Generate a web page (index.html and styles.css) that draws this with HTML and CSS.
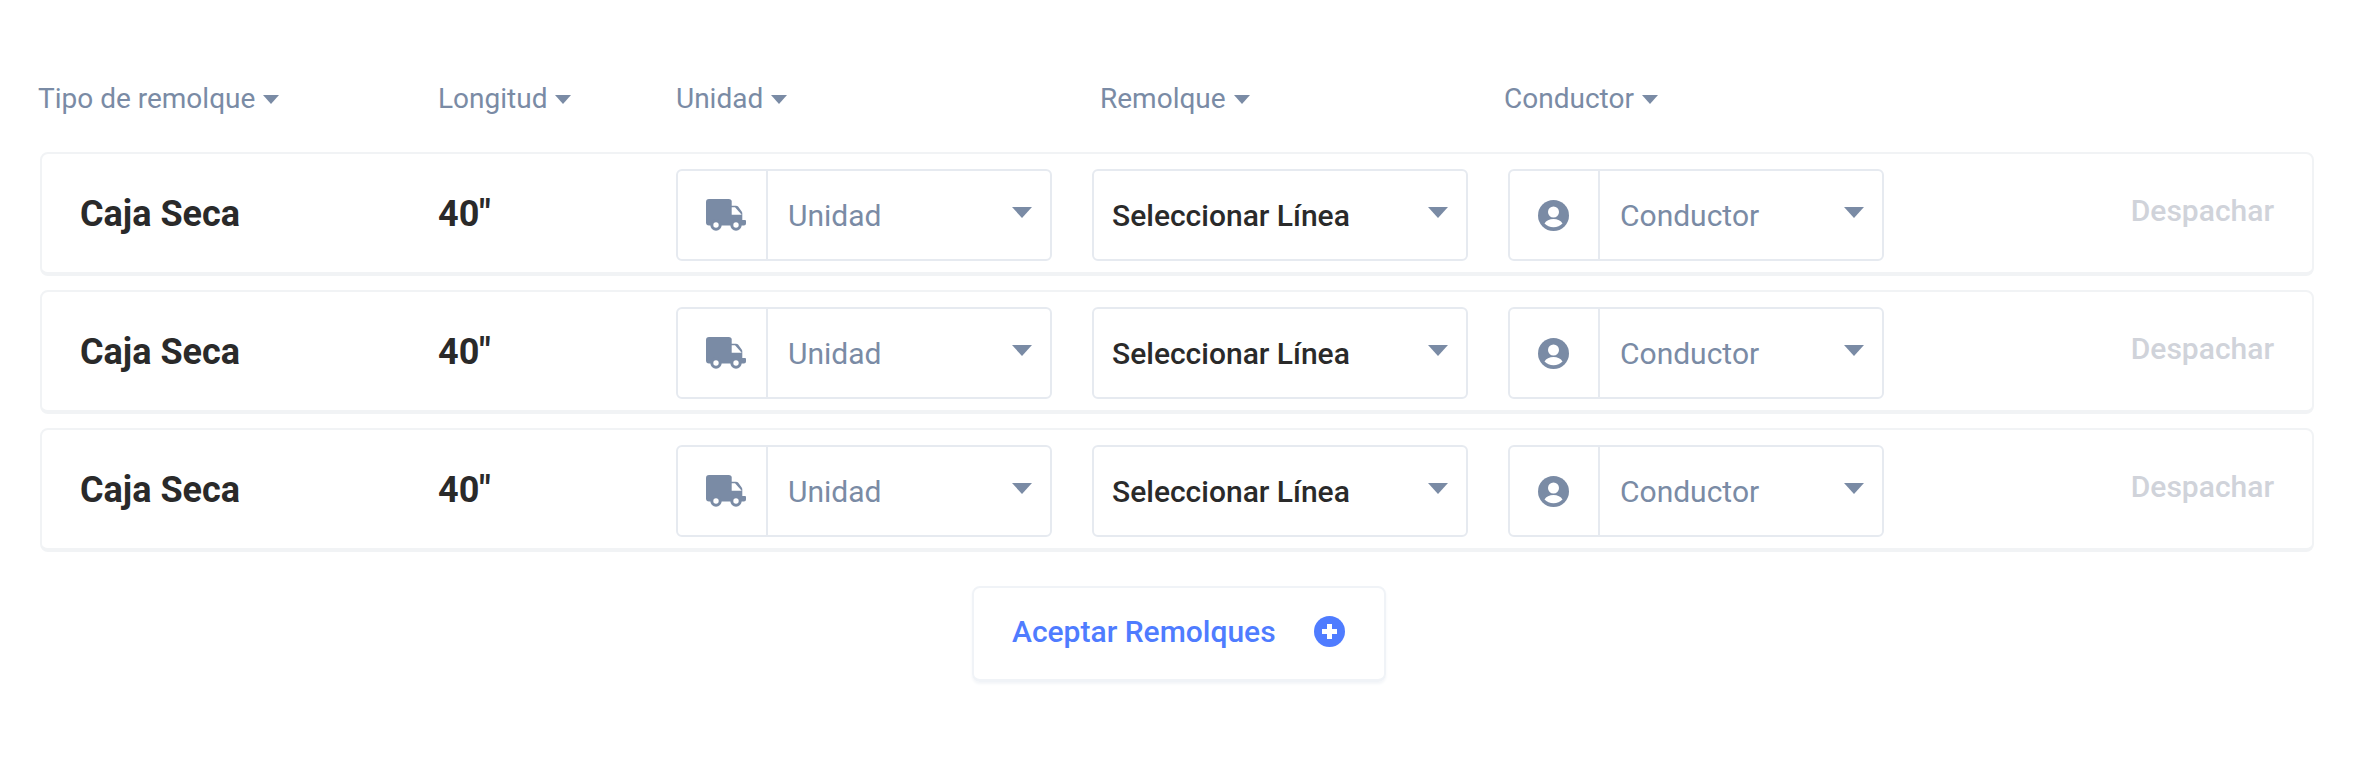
FILE: index.html
```html
<!DOCTYPE html>
<html lang="es">
<head>
<meta charset="utf-8">
<title>Remolques</title>
<link rel="stylesheet" href="styles.css">
</head>
<body>
<svg class="defs" aria-hidden="true">
  <symbol id="truck" viewBox="0 0 40 32">
    <path fill="#7a8ba5" d="M3 0h20a3 3 0 0 1 2.700 1.700V6.700h4.300a3 3 0 0 1 2.100.9l3.600 5a3 3 0 0 1 .6 2V21h2.700a1 1 0 0 1 1 1v2.500a2 2 0 0 1-2 2H3a3 3 0 0 1-3-3V3a3 3 0 0 1 3-3z"/>
    <path fill="#fff" d="M25.700 8.300H29l6.700 7.400h-10z"/>
    <circle cx="10" cy="26" r="5.700" fill="#7a8ba5"/>
    <circle cx="10" cy="26" r="2.700" fill="#fff"/>
    <circle cx="30" cy="26" r="5.700" fill="#7a8ba5"/>
    <circle cx="30" cy="26" r="2.700" fill="#fff"/>
  </symbol>
  <symbol id="person" viewBox="0 0 31 31">
    <circle cx="15.500" cy="15.500" r="15.500" fill="#7a8ba5"/>
    <circle cx="15.500" cy="12" r="5.500" fill="#fff"/>
    <path fill="#fff" d="M6.500 23.500c1.500-3 5-4.500 9-4.500s7.500 1.500 9 4.500c-2.200 2.300-5.500 3.700-9 3.700s-6.800-1.400-9-3.700z"/>
  </symbol>
</svg>
<main class="page">
  <div class="head">
    <div class="hcell h1">Tipo de remolque<span class="caret"></span></div>
    <div class="hcell h2">Longitud<span class="caret"></span></div>
    <div class="hcell h3">Unidad<span class="caret"></span></div>
    <div class="hcell h4">Remolque<span class="caret"></span></div>
    <div class="hcell h5">Conductor<span class="caret"></span></div>
  </div>
  <div class="rows">
    <div class="row">
      <div class="type">Caja Seca</div>
      <div class="len">40"</div>
      <div class="fields">
        <div class="sel"><span class="addon"><svg class="truck"><use href="#truck"/></svg></span><span class="val ph">Unidad</span><span class="arrow"></span></div>
        <div class="sel"><span class="val">Seleccionar Línea</span><span class="arrow"></span></div>
        <div class="sel"><span class="addon"><svg class="person"><use href="#person"/></svg></span><span class="val ph">Conductor</span><span class="arrow"></span></div>
      </div>
      <div class="go">Despachar</div>
    </div>
    <div class="row">
      <div class="type">Caja Seca</div>
      <div class="len">40"</div>
      <div class="fields">
        <div class="sel"><span class="addon"><svg class="truck"><use href="#truck"/></svg></span><span class="val ph">Unidad</span><span class="arrow"></span></div>
        <div class="sel"><span class="val">Seleccionar Línea</span><span class="arrow"></span></div>
        <div class="sel"><span class="addon"><svg class="person"><use href="#person"/></svg></span><span class="val ph">Conductor</span><span class="arrow"></span></div>
      </div>
      <div class="go">Despachar</div>
    </div>
    <div class="row">
      <div class="type">Caja Seca</div>
      <div class="len">40"</div>
      <div class="fields">
        <div class="sel"><span class="addon"><svg class="truck"><use href="#truck"/></svg></span><span class="val ph">Unidad</span><span class="arrow"></span></div>
        <div class="sel"><span class="val">Seleccionar Línea</span><span class="arrow"></span></div>
        <div class="sel"><span class="addon"><svg class="person"><use href="#person"/></svg></span><span class="val ph">Conductor</span><span class="arrow"></span></div>
      </div>
      <div class="go">Despachar</div>
    </div>
  </div>
  <div class="foot">
    <div class="accept">Aceptar Remolques<svg class="plus" viewBox="0 0 31 31"><circle cx="15.500" cy="15.500" r="15.500" fill="#4f7cff"/><path fill="#fff" d="M13 8h5v5h5v5h-5v5h-5v-5H8v-5h5z"/></svg></div>
  </div>
</main>
</body>
</html>
```
FILE: styles.css
```css
* { box-sizing: border-box; }
html, body { margin: 0; background: #fff; }
body { font-family: Roboto, "Liberation Sans", sans-serif; }
.defs { display: none; }
.page { width: 2374px; height: 762px; padding: 78px 60px 0 40px; }
.head { display: flex; height: 40px; align-items: center; margin-left: -2px; color: #7a8ba5; font-size: 28px; line-height: 40px; }
.hcell { display: flex; align-items: center; margin-top: 2px; }
.h1 { width: 400px; }
.h2 { width: 238px; }
.h3 { width: 424px; }
.h4 { width: 404px; }
.caret { width: 0; height: 0; margin-left: 8px; border-left: 8px solid transparent; border-right: 8px solid transparent; border-top: 9px solid #7a8ba5; }
.rows { display: flex; flex-direction: column; gap: 14px; margin-top: 34px; }
.row { display: flex; align-items: center; height: 124px; padding: 0 38px; background: #fff; border: 2px solid #f1f3f5; border-bottom-width: 4px; border-radius: 8px; }
.type { width: 358px; margin-top: 2px; font-size: 36px; font-weight: 700; color: #2a2a2a; }
.len { width: 238px; margin-top: 2px; font-size: 36px; font-weight: 700; color: #2a2a2a; }
.fields { display: flex; gap: 40px; margin-top: 4px; }
.sel { display: flex; align-items: center; width: 376px; height: 92px; border: 2px solid #e6eaf0; border-radius: 6px; }
.addon { display: flex; flex: none; align-items: center; justify-content: center; width: 90px; height: 100%; border-right: 2px solid #e6eaf0; }
.truck { width: 40px; height: 32px; margin-left: 8px; }
.person { width: 31px; height: 31px; margin-right: 1px; }
.val { flex: 1; padding-left: 18px; font-size: 30px; font-weight: 500; color: #2a2a2a; }
.val.ph { padding-left: 20px; font-weight: 400; color: #7a8ba5; }
.arrow { width: 0; height: 0; margin: 0 18px 6px 0; border-left: 10px solid transparent; border-right: 10px solid transparent; border-top: 11px solid #7a8ba5; }
.go { margin-left: auto; margin-bottom: 5px; font-size: 30px; font-weight: 500; color: #d0d3da; }
.foot { display: flex; justify-content: center; margin-top: 34px; padding-left: 4px; }
.accept { display: flex; align-items: center; justify-content: space-between; width: 414px; height: 96px; padding: 0 39px 4px 38px; border: 2px solid #f0f3f7; border-bottom-width: 3px; border-radius: 8px; box-shadow: 0 2px 3px #f3f5f8; font-size: 30px; font-weight: 500; color: #4f7cff; }
.plus { width: 31px; height: 31px; }
```
